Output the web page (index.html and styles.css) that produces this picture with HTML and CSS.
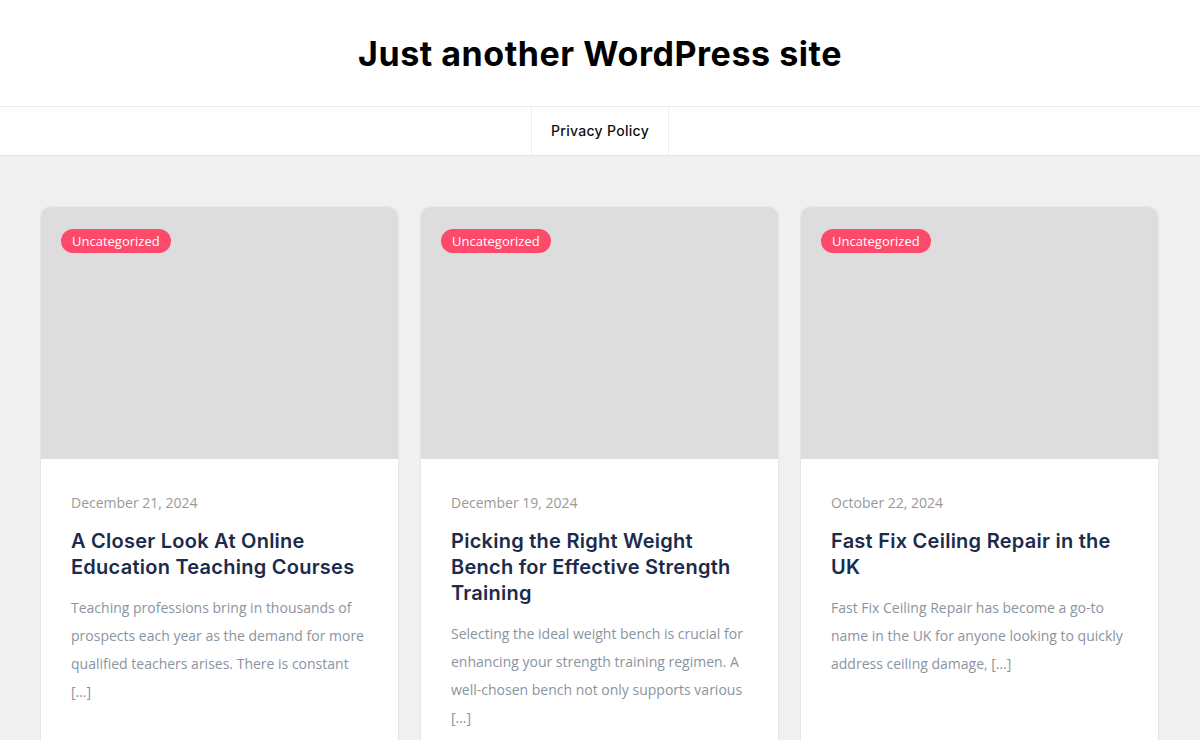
FILE: index.html
```html
<!DOCTYPE html>
<html lang="en">
  <head>
    <meta charset="UTF-8" />
    <meta name="viewport" content="width=device-width, initial-scale=1.0" />
    <title>Just another WordPress site</title>
    <link rel="stylesheet" href="styles.css">
  </head>
  <body>
    <header class="site-header">
      <h1 class="site-title">Just another WordPress site</h1>
    </header>

    <nav class="main-nav">
      <ul>
        <li><a href="#">Privacy Policy</a></li>
      </ul>
    </nav>

    <main class="posts">
      <article class="card">
        <div class="card-thumb">
          <span class="badge">Uncategorized</span>
        </div>
        <div class="card-body">
          <div class="card-date">December 21, 2024</div>
          <h2 class="card-title">A Closer Look At Online Education Teaching Courses</h2>
          <p class="card-excerpt">Teaching professions bring in thousands of prospects each year as the demand for more qualified teachers arises. There is constant […]</p>
        </div>
      </article>

      <article class="card">
        <div class="card-thumb">
          <span class="badge">Uncategorized</span>
        </div>
        <div class="card-body">
          <div class="card-date">December 19, 2024</div>
          <h2 class="card-title">Picking the Right Weight Bench for Effective Strength Training</h2>
          <p class="card-excerpt">Selecting the ideal weight bench is crucial for enhancing your strength training regimen. A well-chosen bench not only supports various […]</p>
        </div>
      </article>

      <article class="card">
        <div class="card-thumb">
          <span class="badge">Uncategorized</span>
        </div>
        <div class="card-body">
          <div class="card-date">October 22, 2024</div>
          <h2 class="card-title">Fast Fix Ceiling Repair in the UK</h2>
          <p class="card-excerpt">Fast Fix Ceiling Repair has become a go-to name in the UK for anyone looking to quickly address ceiling damage, […]</p>
        </div>
      </article>
    </main>
  </body>
</html>
```

FILE: styles.css
```css
* {
  margin: 0;
  padding: 0;
  box-sizing: border-box;
}

body {
  font-family: "Open Sans", Arial, sans-serif;
  background-color: #f0f0f0;
  color: #111;
  height: 740px;
  overflow: hidden;
}

/* Header */
.site-header {
  background-color: #fff;
  height: 107px;
  display: flex;
  justify-content: center;
  align-items: center;
  border-bottom: 1px solid #ebebeb;
}

.site-title {
  font-family: Inter, "Noto Sans", sans-serif;
  font-size: 34px;
  font-weight: 700;
  color: #000;
  letter-spacing: 0.55px;
}

/* Navigation */
.main-nav {
  background-color: #fff;
  border-bottom: 1px solid #e4e4e4;
}

.main-nav ul {
  list-style: none;
  display: flex;
  justify-content: center;
}

.main-nav li {
  border-left: 1px solid #eeeeee;
  border-right: 1px solid #eeeeee;
}

.main-nav a {
  display: block;
  height: 48px;
  line-height: 48px;
  padding: 0 19px;
  font-family: Inter, "Noto Sans", sans-serif;
  font-size: 14px;
  font-weight: 500;
  letter-spacing: 0.3px;
  color: #111;
  text-decoration: none;
}

/* Posts grid */
.posts {
  display: grid;
  grid-template-columns: repeat(3, 359px);
  gap: 21px;
  justify-content: center;
  padding-top: 50px;
  padding-right: 1px;
}

.card {
  background-color: #fff;
  border-radius: 10px;
  border: 1px solid #e6e6e6;
  overflow: hidden;
  height: 600px;
}

.card-thumb {
  background-color: #dddddd;
  height: 252px;
  padding: 22px 20px 0;
}

.badge {
  display: inline-block;
  background-color: #fe4a6a;
  color: #fff;
  font-size: 13px;
  line-height: 24px;
  height: 24px;
  padding: 0 11px;
  border-radius: 12px;
}

.card-body {
  padding: 34px 30px 30px;
}

.card-date {
  font-size: 14px;
  color: #999;
  line-height: 20px;
  margin-bottom: 15px;
}

.card-title {
  font-family: Inter, "Noto Sans", sans-serif;
  font-size: 20px;
  font-weight: 600;
  line-height: 26px;
  letter-spacing: 0.25px;
  color: #1b2b4b;
  margin-bottom: 14px;
}

.card-excerpt {
  font-size: 14px;
  line-height: 28px;
  color: #8a94a0;
}
```
